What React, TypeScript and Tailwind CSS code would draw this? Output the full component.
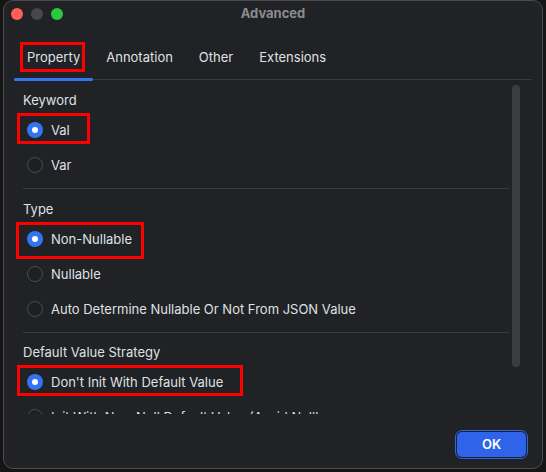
import React from "react";

type Opt = { label: string; selected?: boolean; box?: { left: number; top: number; w: number; h: number } };

function Radio({ selected }: { selected?: boolean }) {
  if (selected) {
    return (
      <span className="flex h-4 w-4 shrink-0 items-center justify-center rounded-full bg-[#3574f0]">
        <span className="h-[6px] w-[6px] rounded-full bg-white" />
      </span>
    );
  }
  return <span className="h-4 w-4 shrink-0 rounded-full border border-[#4a4c50] bg-[#1e1f22]" />;
}

function Row({ opt }: { opt: Opt }) {
  return (
    <div className="relative flex h-[35px] items-center gap-[8px] pl-[4px]">
      <Radio selected={opt.selected} />
      <span className="whitespace-nowrap text-[13px] leading-4 text-[#dfe1e5]">{opt.label}</span>
      {opt.box && (
        <span
          className="pointer-events-none absolute border-[3px] border-[#ff0000]"
          style={{ left: opt.box.left, top: opt.box.top, width: opt.box.w, height: opt.box.h }}
        />
      )}
    </div>
  );
}

function Section({ title, opts, pt, sep }: { title: string; opts: Opt[]; pt: string; sep: boolean }) {
  return (
    <div className={pt}>
      <div className="h-4 text-[13px] leading-4 text-[#dfe1e5]">{title}</div>
      <div className="mt-[4px]">
        {opts.map((o) => (
          <Row key={o.label} opt={o} />
        ))}
      </div>
      {sep && <div className="mt-[6px] h-px bg-[#393b40]" />}
    </div>
  );
}

export default function App() {
  const tabs = ["Property", "Annotation", "Other", "Extensions"];
  return (
    <div
      className="h-[472px] w-[546px] overflow-hidden bg-[#151515]"
      style={{ fontFamily: "Inter, 'Noto Sans', sans-serif" }}
    >
      <div className="ml-[3px] flex h-[469px] w-[540px] flex-col overflow-hidden rounded-[10px] border border-[#4b4c4f] bg-[#212225]">
        {/* title bar */}
        <div className="relative flex h-[26px] shrink-0 items-center gap-[8px] pl-[7px]">
          <span className="h-3 w-3 rounded-full bg-[#fe5f57]" />
          <span className="h-3 w-3 rounded-full bg-[#48484b]" />
          <span className="h-3 w-3 rounded-full bg-[#28c840]" />
          <span className="absolute inset-x-0 top-0 flex h-[26px] items-center justify-center text-[13px] font-bold text-[#8b8b8d]">
            Advanced
          </span>
        </div>
        {/* tabs */}
        <div className="ml-[10px] mr-[10px] mt-[9px] flex shrink-0 border-b border-[#393b40]">
          {tabs.map((t, i) => (
            <div key={t} className="relative flex h-[43px] items-center px-[13px] text-[13px] text-[#dfe1e5]">
              {t}
              {i === 0 && (
                <>
                  <span className="absolute bottom-[-2px] left-0 right-0 h-[3px] rounded-full bg-[#3574f0]" />
                  <span className="pointer-events-none absolute left-[6px] top-[6px] h-[30px] w-[65px] border-[3px] border-[#ff0000]" />
                </>
              )}
            </div>
          ))}
        </div>
        {/* scroll area */}
        <div className="ml-[10px] flex h-[334px] shrink-0 overflow-hidden">
          <div className="w-[495px] pl-[9px]">
            <Section
              title="Keyword"
              pt="pt-[12px]"
              sep
              opts={[
                { label: "Val", selected: true, box: { left: -6, top: 1, w: 73, h: 31 } },
                { label: "Var" },
              ]}
            />
            <Section
              title="Type"
              pt="pt-[12px]"
              sep
              opts={[
                { label: "Non-Nullable", selected: true, box: { left: -7, top: 1, w: 128, h: 37 } },
                { label: "Nullable" },
                { label: "Auto Determine Nullable Or Not From JSON Value" },
              ]}
            />
            <Section
              title="Default Value Strategy"
              pt="pt-[11px]"
              sep={false}
              opts={[
                { label: "Don't Init With Default Value", selected: true, box: { left: -6, top: 1, w: 226, h: 31 } },
                { label: "Init With Non-Null Default Value (Avoid Null)" },
              ]}
            />
          </div>
          <div className="ml-[3px] mt-[5px] h-[282px] w-[8px] rounded-full bg-[#3b3c3f]" />
        </div>
        {/* bottom bar */}
        <div className="mr-[14px] mt-[16px] flex justify-end">
          <span className="rounded-[7px] border border-[#2f64e6] p-[1px]">
            <span className="flex h-[25px] w-[69px] items-center justify-center rounded-[5px] bg-[#2f64ea] text-[13px] font-semibold text-white">
              OK
            </span>
          </span>
        </div>
      </div>
    </div>
  );
}
